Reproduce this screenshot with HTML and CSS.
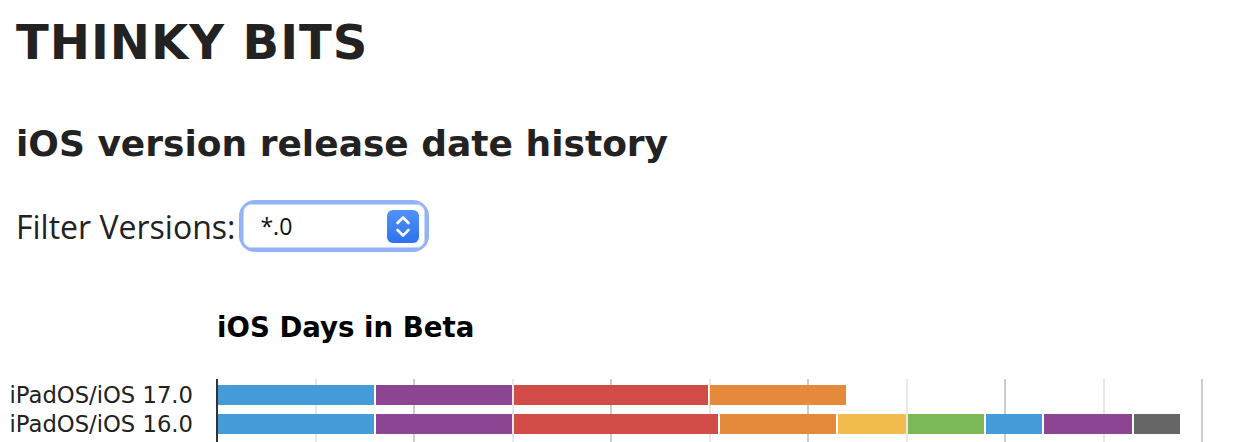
FILE: index.html
```html
<!DOCTYPE html>
<html lang="en">
<head>
    <meta charset="UTF-8">
    <meta name="viewport" content="width=device-width, initial-scale=1.0">
    <title>iOS version release date history - Thinky Bits</title>
    <link rel="stylesheet" href="styles.css">
</head>
<body>
    <header class="site-header">
        <h1 class="site-title">THINKY BITS</h1>
    </header>

    <main>
        <h2 class="page-title">iOS version release date history</h2>

        <div class="filter">
            <label for="versionFilter">Filter Versions:</label>
            <div class="select-wrap">
                <select id="versionFilter">
                    <option>*.0</option>
                    <option>*.1</option>
                    <option>*.2</option>
                    <option>All</option>
                </select>
                <svg class="stepper" width="32" height="33" viewBox="0 0 32 33" aria-hidden="true">
                    <path d="M10.5 13 L16 7.5 L21.5 13" fill="none" stroke="#fff" stroke-width="2.6" stroke-linecap="round" stroke-linejoin="round"/>
                    <path d="M10.5 20 L16 25.5 L21.5 20" fill="none" stroke="#fff" stroke-width="2.6" stroke-linecap="round" stroke-linejoin="round"/>
                </svg>
            </div>
        </div>

        <section class="chart">
            <h3 class="chart-title">iOS Days in Beta</h3>
            <div class="chart-body">
                <div class="labels">
                    <div class="label">iPadOS/iOS 17.0</div>
                    <div class="label">iPadOS/iOS 16.0</div>
                </div>
                <div class="plot">
                    <div class="bar">
                        <span class="seg blue" style="width:156px"></span>
                        <span class="seg purple" style="width:136px"></span>
                        <span class="seg red" style="width:194px"></span>
                        <span class="seg orange" style="width:136px"></span>
                    </div>
                    <div class="bar">
                        <span class="seg blue" style="width:156px"></span>
                        <span class="seg purple" style="width:136px"></span>
                        <span class="seg red" style="width:204px"></span>
                        <span class="seg orange" style="width:116px"></span>
                        <span class="seg yellow" style="width:68px"></span>
                        <span class="seg green" style="width:76px"></span>
                        <span class="seg blue" style="width:56px"></span>
                        <span class="seg purple" style="width:88px"></span>
                        <span class="seg gray" style="width:46px"></span>
                    </div>
                </div>
            </div>
        </section>
    </main>
</body>
</html>
```

FILE: styles.css
```css
body {
    margin: 0;
    padding: 0 16px;
    background: #fff;
    color: #222;
    font-family: "DejaVu Sans", sans-serif;
}
.site-title {
    margin: 18px 0 0;
    font-size: 48px;
    line-height: 1;
    font-weight: bold;
    letter-spacing: 1px;
    color: #222;
}
.page-title {
    margin: 60px 0 0;
    font-size: 36px;
    line-height: 1;
    font-weight: bold;
    color: #222;
}
.filter {
    display: flex;
    align-items: center;
    gap: 8px;
    margin-top: 42px;
}
.filter label {
    font-family: "Open Sans", sans-serif;
    font-size: 32px;
    color: #222;
}
.select-wrap {
    position: relative;
    border-radius: 12px;
    box-shadow: 0 0 0 4px #92b3f6;
}
.select-wrap select {
    display: block;
    appearance: none;
    -webkit-appearance: none;
    width: 182px;
    height: 44px;
    margin: 0;
    padding: 0 0 0 16px;
    border: 1px solid #c9d6f0;
    border-radius: 8px;
    background: #fff;
    font-family: "Open Sans", sans-serif;
    font-size: 23px;
    color: #111;
}
.stepper {
    position: absolute;
    top: 6px;
    right: 6px;
    border-radius: 6px;
    background: linear-gradient(#4f93f8, #2e72ef);
    pointer-events: none;
}
.chart {
    margin-top: 66px;
}
.chart-title {
    margin: 0 0 0 201px;
    font-size: 27.6px;
    line-height: 1;
    font-weight: bold;
    color: #000;
}
.chart-body {
    display: flex;
    margin: 37px 0 0 -16px;
}
.labels {
    width: 193px;
    padding-top: 2px;
    text-align: right;
    white-space: nowrap;
    font-size: 22.7px;
    color: #222;
}
.label {
    height: 29px;
    line-height: 29px;
}
.plot {
    flex: 1;
    margin-left: 23px;
    height: 80px;
    padding-top: 6px;
    border-left: 2px solid #333;
    background-image:
        repeating-linear-gradient(to right, transparent 0 195px, #cccccc 195px 197px),
        repeating-linear-gradient(to right, transparent 0 97px, #e8e8e8 97px 99px, transparent 99px 197px);
    background-size: 985px 100%;
    background-repeat: no-repeat;
}
.bar {
    display: flex;
    gap: 2px;
    height: 20px;
    margin-bottom: 9px;
}
.seg { display: block; height: 100%; }
.seg.blue { background: #459ad8; }
.seg.purple { background: #8c4592; }
.seg.red { background: #d14b47; }
.seg.orange { background: #e5893b; }
.seg.yellow { background: #f2bb4e; }
.seg.green { background: #7ab956; }
.seg.gray { background: #666666; }
```
